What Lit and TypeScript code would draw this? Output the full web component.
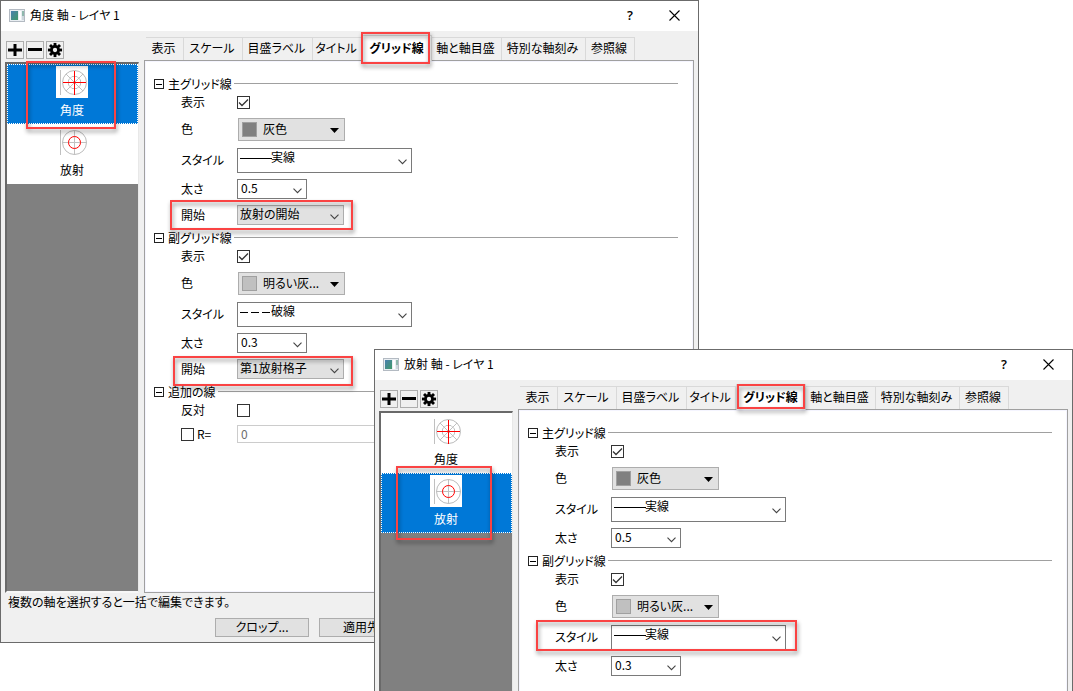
import { LitElement, html, css, svg, nothing } from "lit";
import { customElement, property } from "lit/decorators.js";
import { classMap } from "lit/directives/class-map.js";
import { styleMap } from "lit/directives/style-map.js";

interface Mark { x: number; y: number; w: number; h: number }
interface LineGroup {
  id: string;
  title: string;
  colour: string;
  swatch: "grey" | "light";
  line: "solid" | "dashed";
  lineName: string;
  thickness: string;
  start?: string;
}
interface DialogModel {
  title: string;
  selected: "angle" | "radial";
  groups: LineGroup[];
  extra: boolean;
  footer: boolean;
  marks: Mark[];
}

const TABS = ["表示", "スケール", "目盛ラベル", "タイトル", "グリッド線", "軸と軸目盛", "特別な軸刻み", "参照線"];

const angleDialog: DialogModel = {
  title: "角度 軸 - レイヤ 1",
  selected: "angle",
  extra: true,
  footer: true,
  groups: [
    { id: "major", title: "主グリッド線", colour: "灰色", swatch: "grey", line: "solid", lineName: "実線", thickness: "0.5", start: "放射の開始" },
    { id: "minor", title: "副グリッド線", colour: "明るい灰...", swatch: "light", line: "dashed", lineName: "破線", thickness: "0.3", start: "第1放射格子" },
  ],
  marks: [
    { x: 26, y: 61, w: 90, h: 68 },
    { x: 361, y: 32, w: 69, h: 32 },
    { x: 170, y: 200, w: 183, h: 30 },
    { x: 173, y: 356, w: 180, h: 30 },
  ],
};

const radialDialog: DialogModel = {
  title: "放射 軸 - レイヤ 1",
  selected: "radial",
  extra: false,
  footer: false,
  groups: [
    { id: "major", title: "主グリッド線", colour: "灰色", swatch: "grey", line: "solid", lineName: "実線", thickness: "0.5" },
    { id: "minor", title: "副グリッド線", colour: "明るい灰...", swatch: "light", line: "solid", lineName: "実線", thickness: "0.3" },
  ],
  marks: [
    { x: 22, y: 117, w: 96, h: 74 },
    { x: 363, y: 35, w: 68, h: 25 },
    { x: 162, y: 271, w: 261, h: 31 },
  ],
};

const gearTeeth = [0, 45, 90, 135].map(
  (a) => svg`<rect x="7" y="1" width="3" height="15" transform="rotate(${a} 8.5 8.5)"></rect>`
);

const axisIcon = (kind: "angle" | "radial") => html`
  <svg class="axis-icon" width="32" height="32" viewBox="0 0 32 32" fill="none" aria-hidden="true">
    <rect x="4" y="4" width="1" height="25" fill="#c0c0c0"></rect>
    <circle cx="18.5" cy="16.5" r="12" stroke="#bcbcbc"></circle>
    ${kind === "angle"
      ? svg`<path d="M10 8l17 17M27 8l-17 17" stroke="#c0c0c0"></path>
            <path d="M16 10.500h5l3.500 3.500v5l-3.500 3.500h-5l-3.500-3.500v-5z" stroke="#c0c0c0"></path>
            <rect x="18" y="5" width="1" height="24" fill="#ff0000"></rect>
            <rect x="7" y="16" width="23" height="1" fill="#ff0000"></rect>`
      : svg`<rect x="18" y="4" width="1" height="25" fill="#c0c0c0"></rect>
            <rect x="6" y="16" width="25" height="1" fill="#c0c0c0"></rect>
            <circle cx="18.500" cy="16.500" r="6" stroke="#ff0000"></circle>`}
  </svg>`;

@customElement("axis-dialog")
export class AxisDialog extends LitElement {
  @property({ attribute: false }) model!: DialogModel;

  static styles = css`
    :host {
      display: block;
      box-sizing: border-box;
      border: 1px solid #6b6b6b;
      background: #f0f0f0;
      color: #000;
    }
    * { box-sizing: border-box; }
    button, select, input {
      font: inherit;
      font-feature-settings: inherit;
      color: inherit;
      margin: 0;
      border-radius: 0;
    }
    .title-bar {
      display: flex;
      align-items: center;
      height: 30px;
      padding: 0 7px 2px 8px;
      background: #fff;
    }
    .app-icon { margin-right: 5px; flex: none; }
    .title { flex: 1; margin: 0; font-size: 12px; font-weight: 400; }
    .caption-button {
      display: grid;
      place-items: center;
      width: 56px;
      height: 28px;
      padding: 0;
      border: 0;
      background: none;
      font-family: "Open Sans", "Noto Sans", sans-serif;
      font-size: 13px;
      font-weight: 600;
    }
    .caption-button:last-child { width: 33px; }
    .body { display: flex; gap: 5px; padding: 0 4px; }
    .side { display: flex; flex-direction: column; width: 134px; flex: none; padding-top: 10px; }
    .tools { display: flex; gap: 2px; margin: 0 0 3px 1px; }
    .tool {
      display: grid;
      place-items: center;
      width: 18px;
      height: 18px;
      padding: 0;
      border: 1px solid #adadad;
      background: #f0f0f0;
    }
    .list {
      flex: 1;
      margin: 0;
      padding: 0;
      list-style: none;
      background: #808080;
      border: 2px solid #696969;
      border-right: 1px solid #e8e8e8;
      border-bottom: 2px solid #f7f7f7;
    }
    .item {
      display: flex;
      flex-direction: column;
      align-items: center;
      width: 100%;
      height: 60px;
      padding: 1px 1px 0 0;
      border: 1px solid #fff;
      background: #fff;
    }
    .item.selected { background: #0078d7; border: 1px dotted #fff; color: #fff; }
    .axis-icon { display: block; background: #fff; flex: none; }
    .item-name { line-height: 24px; }
    .main { flex: 1; min-width: 0; display: flex; flex-direction: column; padding-top: 6px; }
    .tabs {
      display: grid;
      grid-template-columns: 38px 59px 70px 49px 70px 70px 84px 49px;
      height: 23px;
      padding-left: 2px;
    }
    .tab {
      padding: 0 2px 4px 0;
      border: 0;
      border-top: 1px solid #d9d9d9;
      border-right: 1px solid #d9d9d9;
      background: #f0f0f0;
      white-space: nowrap;
      text-align: center;
    }
    .tab.selected {
      height: 26px;
      margin-top: -2px;
      padding: 0 1px 1px 0;
      border: 1px solid #d9d9d9;
      border-bottom: 0;
      background: #fff;
      font-weight: 700;
      z-index: 1;
    }
    .pane {
      flex: 1;
      min-height: 533px;
      padding: 17px 15px 0 8px;
      border: 1px solid #a0a0a0;
      outline: 1px solid #f5f5ff;
      outline-offset: -2px;
      background: #fff;
    }
    .group { padding-bottom: 4px; }
    .head { display: flex; align-items: center; height: 12px; }
    .toggle {
      display: grid;
      place-items: center;
      width: 10px;
      height: 10px;
      margin: 0 4px 0 1px;
      padding: 0;
      border: 1px solid #222;
      background: #fff;
    }
    .legend { margin: 0 2px 0 0; font-size: 12px; font-weight: 400; line-height: 12px; white-space: nowrap; }
    .rule { flex: 1; height: 1px; margin-bottom: 2px; background: #a0a0a0; }
    .row {
      display: grid;
      grid-template-columns: 56px minmax(0, 1fr);
      align-items: center;
      justify-items: start;
      height: 26px;
      padding-left: 28px;
    }
    .row.check { height: 24px; }
    .row.colour { height: 30px; }
    .row.style { height: 32px; }
    .row-label { display: flex; align-items: center; gap: 3px; white-space: nowrap; }
    .box {
      appearance: none;
      width: 13px;
      height: 13px;
      border: 1px solid #333;
      background: #fff;
    }
    .box:checked {
      background: #fff url('data:image/svg+xml,<svg xmlns="http://www.w3.org/2000/svg" width="11" height="11"><path d="M1 5.500L4 8.500L10 2.500" fill="none" stroke="%23333" stroke-width="1.300"/></svg>') center no-repeat;
    }
    .colour-button {
      display: flex;
      align-items: center;
      width: 107px;
      height: 23px;
      margin-left: 1px;
      padding: 0 4px 0 3px;
      border: 1px solid #adadad;
      background: #e1e1e1;
      text-align: left;
    }
    .colour-name { flex: 1; padding: 0 0 1px 6px; white-space: nowrap; }
    .arrow { width: 9px; height: 5px; margin: 3px 1px 0 0; }
    .swatch { width: 15px; height: 15px; border: 1px solid #a0a0a0; }
    .swatch.grey { background: #808080; }
    .swatch.light { background: #c0c0c0; }
    .combo {
      appearance: none;
      height: 20px;
      padding: 0 16px 2px 2px;
      border: 1px solid #7a7a7a;
      background: #fff url('data:image/svg+xml,<svg xmlns="http://www.w3.org/2000/svg" width="9" height="6"><path d="M.5.7L4.500 4.700L8.500.7" fill="none" stroke="%23444" stroke-width="1.100"/></svg>') right 4px top 8px no-repeat;
    }
    .combo.thin { width: 70px; padding-left: 3px; }
    .combo.start { width: 107px; background-color: #e1e1e1; border-color: #adadad; }
    .combo.line { width: 175px; height: 25px; padding: 0 16px 6px 33px; }
    .combo.solid {
      background-image: url('data:image/svg+xml,<svg xmlns="http://www.w3.org/2000/svg" width="9" height="6"><path d="M.5.7L4.500 4.700L8.500.7" fill="none" stroke="%23444" stroke-width="1.100"/></svg>'), url('data:image/svg+xml,<svg xmlns="http://www.w3.org/2000/svg" width="32" height="1"><path d="M0 .5h32" stroke="%23000"/></svg>');
      background-position: right 4px top 10px, 2px 9px;
      background-repeat: no-repeat;
    }
    .combo.dashed {
      background-image: url('data:image/svg+xml,<svg xmlns="http://www.w3.org/2000/svg" width="9" height="6"><path d="M.5.7L4.500 4.700L8.500.7" fill="none" stroke="%23444" stroke-width="1.100"/></svg>'), url('data:image/svg+xml,<svg xmlns="http://www.w3.org/2000/svg" width="32" height="1"><path d="M0 .5h32" stroke="%23000" stroke-dasharray="8 3"/></svg>');
      background-position: right 4px top 10px, 2px 9px;
      background-repeat: no-repeat;
    }
    .value {
      width: 100%;
      height: 18px;
      padding: 0 3px 2px;
      border: 1px solid #ccc;
      background: #fff;
      color: #6d6d6d;
    }
    .hint { margin: 0; padding-left: 7px; height: 20px; line-height: 18px; }
    .actions { display: flex; gap: 10px; padding: 5px 0 5px 214px; }
    .action {
      width: 94px;
      height: 19px;
      padding: 0 0 2px;
      border: 1px solid #adadad;
      background: #e1e1e1;
      line-height: 14px;
    }
    .mark {
      position: absolute;
      border: 2px solid #fa4343;
      filter: drop-shadow(1px 3px 2px rgba(0, 0, 0, 0.45));
      pointer-events: none;
      z-index: 2;
    }
  `;

  private item(kind: "angle" | "radial", name: string) {
    const selected = this.model.selected === kind;
    return html`<li>
      <button class=${classMap({ item: true, selected })} aria-pressed=${selected}>
        ${axisIcon(kind)}<span class="item-name">${name}</span>
      </button>
    </li>`;
  }

  private head(title: string) {
    return html`<div class="head">
      <button class="toggle" aria-label="${title}" aria-expanded="true">
        <svg width="8" height="8" viewBox="0 0 8 8" aria-hidden="true"><path d="M1 4.500h6" stroke="#000"></path></svg>
      </button>
      <h2 class="legend">${title}</h2>
      <span class="rule"></span>
    </div>`;
  }

  private group(g: LineGroup) {
    return html`<section class="group">
      ${this.head(g.title)}
      <div class="row check">
        <label class="row-label" for="${g.id}-show">表示</label>
        <input class="box" type="checkbox" id="${g.id}-show" checked />
      </div>
      <div class="row colour">
        <label class="row-label" for="${g.id}-colour">色</label>
        <button class="colour-button" id="${g.id}-colour" aria-haspopup="listbox">
          <span class=${classMap({ swatch: true, [g.swatch]: true })}></span>
          <span class="colour-name">${g.colour}</span>
          <svg class="arrow" viewBox="0 0 9 5" aria-hidden="true"><path d="M0 0h9L4.500 5z"></path></svg>
        </button>
      </div>
      <div class="row style">
        <label class="row-label" for="${g.id}-style">スタイル</label>
        <select class=${classMap({ combo: true, line: true, [g.line]: true })} id="${g.id}-style">
          <option>${g.lineName}</option>
        </select>
      </div>
      <div class="row">
        <label class="row-label" for="${g.id}-thickness">太さ</label>
        <select class="combo thin" id="${g.id}-thickness"><option>${g.thickness}</option></select>
      </div>
      ${g.start
        ? html`<div class="row">
            <label class="row-label" for="${g.id}-start">開始</label>
            <select class="combo start" id="${g.id}-start"><option>${g.start}</option></select>
          </div>`
        : nothing}
    </section>`;
  }

  render() {
    const m = this.model;
    return html`
      <header class="title-bar">
        <svg class="app-icon" width="16" height="13" viewBox="0 0 16 13" aria-hidden="true">
          <defs>
            <linearGradient id="screen" x1="0" y1="0" x2="1" y2="1">
              <stop offset="0" stop-color="#4a7fb0"></stop>
              <stop offset="1" stop-color="#3f9a68"></stop>
            </linearGradient>
          </defs>
          <rect x=".5" y=".5" width="15" height="12" fill="#e9eef2" stroke="#b3bac2"></rect>
          <rect x="2" y="2" width="7" height="9" fill="url(#screen)"></rect>
          <rect x="10" y="2" width="2" height="9" fill="#fff"></rect>
          <rect x="13" y="2" width="2" height="5" fill="#8fb8ad"></rect>
          <rect x="13" y="7" width="2" height="4" fill="#cdd6dc"></rect>
        </svg>
        <h1 class="title">${m.title}</h1>
        <button class="caption-button" aria-label="ヘルプ">?</button>
        <button class="caption-button" aria-label="閉じる">
          <svg width="11" height="11" viewBox="0 0 11 11" aria-hidden="true"><path d="M.5.5l10 10M10.500.5l-10 10" stroke="#000" stroke-width="1.100"></path></svg>
        </button>
      </header>
      <div class="body">
        <div class="side">
          <div class="tools">
            <button class="tool" aria-label="追加"><svg width="14" height="14" viewBox="0 0 14 14" aria-hidden="true"><path d="M7 1v12M0 7h14" stroke="#000" stroke-width="3"></path></svg></button>
            <button class="tool" aria-label="削除"><svg width="14" height="14" viewBox="0 0 14 14" aria-hidden="true"><path d="M0 6.500h14" stroke="#000" stroke-width="3"></path></svg></button>
            <button class="tool" aria-label="設定">
              <svg width="16" height="16" viewBox="0 0 17 17" aria-hidden="true">
                ${gearTeeth}
                <circle cx="8.500" cy="8.500" r="5.200"></circle>
                <circle cx="8.500" cy="8.500" r="2.300" fill="#f0f0f0"></circle>
              </svg>
            </button>
          </div>
          <ul class="list">
            ${this.item("angle", "角度")}${this.item("radial", "放射")}
          </ul>
        </div>
        <div class="main">
          <div class="tabs" role="tablist">
            ${TABS.map((t) => html`<button role="tab" aria-selected=${t === "グリッド線"} class=${classMap({ tab: true, selected: t === "グリッド線" })}>${t}</button>`)}
          </div>
          <div class="pane">
            ${m.groups.map((g) => this.group(g))}
            ${m.extra
              ? html`<section class="group">
                  ${this.head("追加の線")}
                  <div class="row check">
                    <label class="row-label" for="opposite">反対</label>
                    <input class="box" type="checkbox" id="opposite" />
                  </div>
                  <div class="row check">
                    <label class="row-label"><input class="box" type="checkbox" />R=</label>
                    <input class="value" type="text" value="0" aria-label="R" disabled />
                  </div>
                </section>`
              : nothing}
          </div>
        </div>
      </div>
      ${m.footer
        ? html`<p class="hint">複数の軸を選択すると一括で編集できます。</p>
            <div class="actions">
              <button class="action">クロップ...</button>
              <button class="action">適用先...</button>
            </div>`
        : nothing}
      ${m.marks.map((k) => html`<div class="mark" style=${styleMap({ left: `${k.x - 1}px`, top: `${k.y - 1}px`, width: `${k.w}px`, height: `${k.h}px` })}></div>`)}
    `;
  }
}

@customElement("app-root")
export class AppRoot extends LitElement {
  static styles = css`
    :host {
      display: block;
      position: relative;
      height: 100vh;
      overflow: hidden;
      background: #fff;
      font: 12px/16px "Noto Sans CJK JP", sans-serif;
      font-feature-settings: "palt";
    }
    .window { position: absolute; width: 699px; }
    .back { left: 0; top: 0; }
    .front { left: 374px; top: 349px; }
  `;

  render() {
    return html`
      <axis-dialog class="window back" .model=${angleDialog}></axis-dialog>
      <axis-dialog class="window front" .model=${radialDialog}></axis-dialog>
    `;
  }
}
